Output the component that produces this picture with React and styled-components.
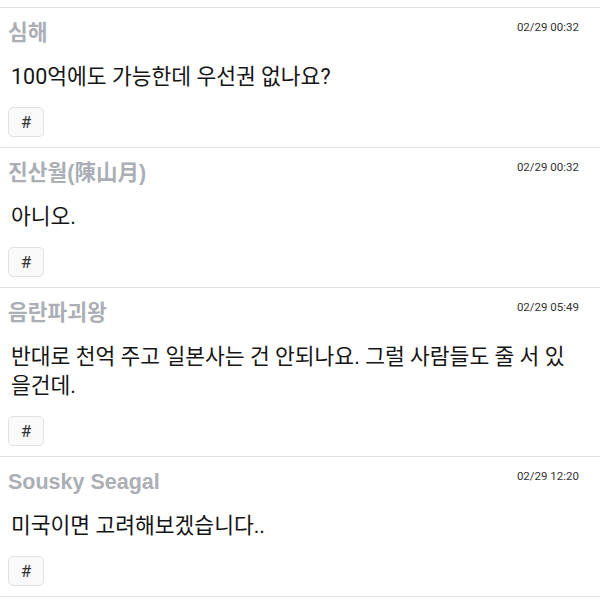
import styled, { createGlobalStyle } from "styled-components";

const comments = [
    { name: "심해", time: "02/29 00:32", lines: ["100억에도 가능한데 우선권 없나요?"] },
    { name: "진산월(陳山月)", time: "02/29 00:32", lines: ["아니오."] },
    { name: "음란파괴왕", time: "02/29 05:49", lines: ["반대로 천억 주고 일본사는 건 안되나요. 그럴 사람들도 줄 서 있", "을건데."] },
    { name: "Sousky Seagal", time: "02/29 12:20", lines: ["미국이면 고려해보겠습니다.."] },
];

export default function App(){
    return(
        <>
            <GlobalStyle/>
            <CommentList>
                {comments.map((c, i) => (
                    <CommentItem key={i}>
                        <CommentHeader>
                            <UserName>{c.name}</UserName>
                            <TimeStamp>{c.time}</TimeStamp>
                        </CommentHeader>
                        <CommentBody>
                            {c.lines.map((line, j) => (
                                <span key={j}>{line}{j < c.lines.length - 1 && <br/>}</span>
                            ))}
                        </CommentBody>
                        <HashButton>#</HashButton>
                    </CommentItem>
                ))}
            </CommentList>
        </>
    );
}

const GlobalStyle = createGlobalStyle`
    body{
        margin: 0;
        background: #ffffff;
        font-family: "Roboto", "Noto Sans CJK KR", sans-serif;
    }
`;

const CommentList = styled.ul`
    list-style: none;
    margin: 0;
    padding: 7px 0 0 0;
    border-bottom: 1.5px solid #e3e3e3;
`;

const CommentItem = styled.li`
    display: flex;
    flex-direction: column;
    align-items: flex-start;
    padding: 12px 21px 10px 8px;
    border-top: 1.5px solid #e3e3e3;
`;

const CommentHeader = styled.div`
    width: 100%;
    display: flex;
    justify-content: space-between;
    align-items: flex-start;
`;

const UserName = styled.span`
    font-family: "Liberation Sans", "Noto Sans CJK KR", sans-serif;
    font-size: 21.5px;
    font-weight: 700;
    line-height: 26px;
    color: #abafb5;
`;

const TimeStamp = styled.span`
    font-size: 11.5px;
    line-height: 14px;
    color: #333333;
`;

const CommentBody = styled.p`
    margin: 16px 0 16px 3px;
    font-size: 21.5px;
    line-height: 29px;
    color: #151515;
`;

const HashButton = styled.button`
    width: 36px;
    height: 30px;
    padding: 0;
    border: 1px solid #e2e2e2;
    border-radius: 5px;
    background: #fafafa;
    color: #333333;
    font-family: "Roboto", sans-serif;
    font-size: 17px;
    cursor: pointer;
`;
